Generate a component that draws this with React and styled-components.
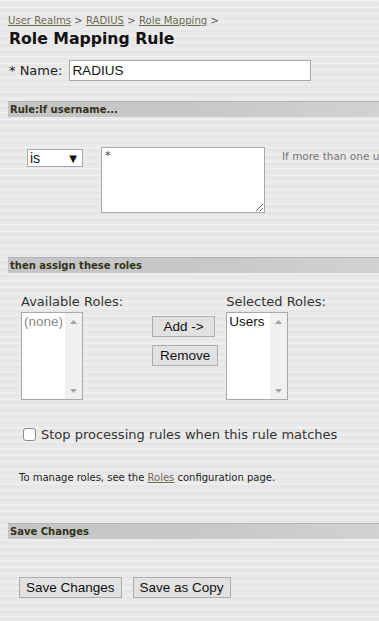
import React from 'react';
import styled, { createGlobalStyle } from 'styled-components';

const GlobalStyle = createGlobalStyle`
  html, body {
    margin: 0;
    padding: 0;
    overflow: hidden;
  }
  body {
    background-color: #e9e9e9;
    background-image:
      repeating-linear-gradient(180deg, rgba(255,255,255,0.35) 0 1px, transparent 1px 3px, rgba(0,0,0,0.025) 3px 4px, transparent 4px 7px);
    font-family: Verdana, "DejaVu Sans", sans-serif;
    color: #222;
  }
`;

const Page = styled.div`
  width: 379px;
  min-height: 621px;
  padding: 14px 0 0 8px;
  box-sizing: border-box;
`;

const Crumbs = styled.div`
  font-size: 10.1px;
  line-height: 14px;
  color: #555;
  white-space: nowrap;
`;

const CrumbLink = styled.a`
  color: #6b6b52;
  text-decoration: underline;
`;

const Title = styled.h1`
  margin: 1px 0 0 1px;
  font-size: 15.7px;
  line-height: 20px;
  font-weight: bold;
  color: #111;
  white-space: nowrap;
`;

const NameRow = styled.div`
  display: flex;
  align-items: center;
  gap: 7px;
  margin: 11px 0 0 1px;
  font-size: 13px;
  color: #222;
`;

const TextInput = styled.input`
  width: 242px;
  height: 21px;
  box-sizing: border-box;
  border: 1px solid #a9a9a9;
  background: #fff;
  padding: 0 2px;
  font-family: Arial, "Liberation Sans", sans-serif;
  font-size: 13.5px;
  color: #111;
  outline: none;
`;

const SectionBar = styled.div`
  margin-top: ${({ $top }) => $top}px;
  height: 16px;
  box-sizing: border-box;
  border-top: 1px solid #b3b3b3;
  background: linear-gradient(90deg, #c4c4c4 0%, #c9c9c9 60%, #d2d2d2 100%);
  padding-left: 2px;
  font-size: 10px;
  line-height: 15px;
  font-weight: bold;
  color: #33331a;
  white-space: nowrap;
`;

const RuleRow = styled.div`
  display: flex;
  align-items: flex-start;
  margin: 30px 0 0 19px;
`;

const FakeSelect = styled.div`
  display: flex;
  flex-shrink: 0;
  justify-content: space-between;
  align-items: center;
  width: 56px;
  height: 18px;
  margin-top: 2px;
  box-sizing: border-box;
  border: 1px solid #a9a9a9;
  background: #fff;
  padding: 0 5px 0 2px;
  font-family: Arial, "Liberation Sans", sans-serif;
  font-size: 14px;
  color: #111;
`;

const Arrow = styled.span`
  font-family: "DejaVu Sans", sans-serif;
  font-size: 10px;
  color: #111;
`;

const RuleText = styled.textarea`
  flex-shrink: 0;
  width: 164px;
  height: 66px;
  margin: 0 0 0 18px;
  box-sizing: border-box;
  border: 1px solid #a9a9a9;
  background: #fff;
  padding: 1px 3px;
  font-family: "DejaVu Sans", sans-serif;
  font-size: 11px;
  color: #333;
  outline: none;
`;

const Hint = styled.div`
  flex-shrink: 0;
  margin: 3px 0 0 17px;
  font-size: 10.5px;
  color: #777;
  white-space: nowrap;
`;

const RolesRow = styled.div`
  display: flex;
  align-items: flex-start;
  margin: 21px 0 0 13px;
`;

const RoleColumn = styled.div`
  display: flex;
  flex-direction: column;
`;

const RoleLabel = styled.div`
  font-size: 13px;
  line-height: 16px;
  color: #333;
  margin-bottom: 2px;
  white-space: nowrap;
`;

const ListBox = styled.div`
  display: flex;
  width: 62px;
  height: 88px;
  box-sizing: border-box;
  border: 1px solid #a9a9a9;
  background: #fff;
`;

const ListItems = styled.div`
  flex: 1;
  padding: 1px 0 0 2px;
  font-family: Arial, "Liberation Sans", sans-serif;
  font-size: 13.5px;
  line-height: 16px;
  color: ${({ $muted }) => ($muted ? '#8a8a8a' : '#111')};
`;

const ScrollTrack = styled.div`
  width: 17px;
  background: #f0f0f0;
  display: flex;
  flex-direction: column;
  justify-content: space-between;
  align-items: center;
  padding: 7px 0 6px;
  box-sizing: border-box;
`;

const ButtonStack = styled.div`
  display: flex;
  flex-direction: column;
  align-items: flex-start;
  gap: 8px;
  margin: 22px 8px 0 29px;
`;

const Button = styled.button`
  width: ${({ $w }) => ($w ? `${$w}px` : 'auto')};
  height: 21px;
  box-sizing: border-box;
  border: 1px solid #adadad;
  background: #e1e1e1;
  padding: 0 6px;
  font-family: Arial, "Liberation Sans", sans-serif;
  font-size: 13.5px;
  color: #111;
  cursor: pointer;
`;

const CheckRow = styled.label`
  display: flex;
  align-items: center;
  gap: 5px;
  margin: 27px 0 0 15px;
  font-size: 13px;
  color: #333;
  white-space: nowrap;
`;

const Check = styled.input`
  appearance: none;
  margin: 0;
  width: 13px;
  height: 13px;
  border: 1px solid #8a8a8a;
  border-radius: 3px;
  background: #fff;
`;

const Note = styled.div`
  margin: 30px 0 0 11px;
  font-size: 10px;
  color: #222;
  white-space: nowrap;
`;

const SaveRow = styled.div`
  display: flex;
  gap: 11px;
  margin: 38px 0 0 11px;
`;

const ScrollArrow = ({ down }) => (
  <svg width="7" height="4" viewBox="0 0 7 4">
    <path d={down ? 'M0 0 L7 0 L3.5 4 Z' : 'M0 4 L7 4 L3.5 0 Z'} fill="#a3a3a3" />
  </svg>
);

const RoleList = ({ label, items, muted }) => (
  <RoleColumn>
    <RoleLabel>{label}</RoleLabel>
    <ListBox>
      <ListItems $muted={muted}>
        {items.map((item) => (
          <div key={item}>{item}</div>
        ))}
      </ListItems>
      <ScrollTrack>
        <ScrollArrow />
        <ScrollArrow down />
      </ScrollTrack>
    </ListBox>
  </RoleColumn>
);

const App = () => (
  <>
    <GlobalStyle />
    <Page>
      <Crumbs>
        <CrumbLink>User Realms</CrumbLink> &gt; <CrumbLink>RADIUS</CrumbLink> &gt;{' '}
        <CrumbLink>Role Mapping</CrumbLink> &gt;
      </Crumbs>
      <Title>Role Mapping Rule</Title>

      <NameRow>
        <span>* Name:</span>
        <TextInput defaultValue="RADIUS" />
      </NameRow>

      <SectionBar $top={20}>Rule:If username...</SectionBar>
      <RuleRow>
        <FakeSelect>
          <span>is</span>
          <Arrow>▼</Arrow>
        </FakeSelect>
        <RuleText defaultValue="*" />
        <Hint>If more than one us</Hint>
      </RuleRow>

      <SectionBar $top={44}>then assign these roles</SectionBar>
      <RolesRow>
        <RoleList label="Available Roles:" items={['(none)']} muted />
        <ButtonStack>
          <Button $w={63}>Add -&gt;</Button>
          <Button $w={66}>Remove</Button>
        </ButtonStack>
        <RoleList label="Selected Roles:" items={['Users']} />
      </RolesRow>

      <CheckRow>
        <Check type="checkbox" />
        Stop processing rules when this rule matches
      </CheckRow>

      <Note>
        To manage roles, see the <CrumbLink>Roles</CrumbLink> configuration page.
      </Note>

      <SectionBar $top={40}>Save Changes</SectionBar>
      <SaveRow>
        <Button>Save Changes</Button>
        <Button>Save as Copy</Button>
      </SaveRow>
    </Page>
  </>
);

export default App;
